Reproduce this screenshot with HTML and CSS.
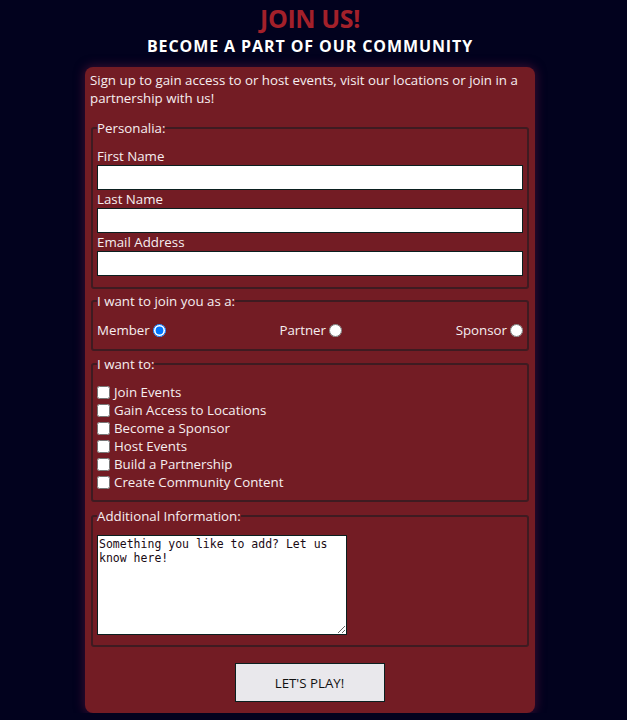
FILE: index.html
```html
<!DOCTYPE html>
<html lang="en">
<head>
<meta charset="utf-8">
<title>Join Us</title>
<link rel="stylesheet" href="styles.css">
</head>
<body>
<div class="page">
  <h1 class="title">JOIN US!</h1>
  <h2 class="subtitle">BECOME A PART OF OUR COMMUNITY</h2>
  <form class="card">
    <p class="intro">Sign up to gain access to or host events, visit our locations or join in a partnership with us!</p>
    <fieldset class="group">
      <legend class="legend">Personalia:</legend>
      <div class="fields">
        <label class="field-label" for="fn">First Name</label>
        <input class="text-input" id="fn" type="text">
        <label class="field-label" for="ln">Last Name</label>
        <input class="text-input" id="ln" type="text">
        <label class="field-label" for="em">Email Address</label>
        <input class="text-input" id="em" type="email">
      </div>
    </fieldset>
    <fieldset class="group">
      <legend class="legend">I want to join you as a:</legend>
      <div class="radios">
        <label class="radio">Member <input type="radio" name="role" checked></label>
        <label class="radio">Partner <input type="radio" name="role"></label>
        <label class="radio">Sponsor <input type="radio" name="role"></label>
      </div>
    </fieldset>
    <fieldset class="group group-wide">
      <legend class="legend">I want to:</legend>
      <div class="checks">
        <label class="check"><input type="checkbox">Join Events</label>
        <label class="check"><input type="checkbox">Gain Access to Locations</label>
        <label class="check"><input type="checkbox">Become a Sponsor</label>
        <label class="check"><input type="checkbox">Host Events</label>
        <label class="check"><input type="checkbox">Build a Partnership</label>
        <label class="check"><input type="checkbox">Create Community Content</label>
      </div>
    </fieldset>
    <fieldset class="group group-last">
      <legend class="legend">Additional Information:</legend>
      <textarea class="notes">Something you like to add? Let us know here!</textarea>
    </fieldset>
    <div class="actions">
      <button class="submit" type="button">LET'S PLAY!</button>
    </div>
  </form>
</div>
</body>
</html>
```
FILE: styles.css
```css
html, body {
  margin: 0;
  padding: 0;
}
body {
  background: #02021e;
  font-family: "Open Sans", "Noto Sans", sans-serif;
  color: #f6eef0;
}
.page {
  width: 620px;
  display: flex;
  flex-direction: column;
  align-items: center;
}
.title {
  margin: 0;
  padding-top: 2px;
  font-size: 25px;
  line-height: 32px;
  font-weight: 700;
  letter-spacing: -0.4px;
  color: #a3202a;
}
.subtitle {
  margin: 0;
  font-size: 16px;
  line-height: 24px;
  font-weight: 700;
  letter-spacing: 0.9px;
  color: #ffffff;
}
.card {
  box-sizing: border-box;
  width: 450px;
  margin-top: 9px;
  padding: 4px 6px 11px 5px;
  background: #731c24;
  border-radius: 8px;
  box-shadow: 0 0 10px 2px rgba(90, 20, 60, 0.55);
}
.intro {
  margin: 0 0 12px;
  font-size: 13.3px;
  line-height: 18px;
}
.group {
  margin: 3px 0 0 1px;
  padding: 0 4px 9px;
  border: 2px solid #3e1b21;
  border-radius: 3px;
  font-size: 13.3px;
  line-height: 18px;
}
.group-wide {
  margin-top: 4px;
}
.group-last {
  margin-top: 5px;
}
.legend {
  padding: 0;
  margin-left: 0;
}
.fields {
  display: flex;
  flex-direction: column;
  padding-top: 10px;
  padding-bottom: 2px;
}
.field-label {
  line-height: 18px;
}
.text-input {
  box-sizing: border-box;
  height: 25px;
  width: 100%;
  margin: 0;
  border: 1px solid #0b1f1f;
  background: #ffffff;
}
.radios {
  display: flex;
  justify-content: space-between;
  padding-top: 11px;
  padding-bottom: 1px;
}
.radio {
  display: flex;
  align-items: center;
}
.radio input {
  margin: 0 0 0 3px;
  width: 13px;
  height: 13px;
}
.checks {
  display: flex;
  flex-direction: column;
  padding-top: 10px;
  padding-bottom: 0;
}
.check {
  display: flex;
  align-items: center;
  height: 18px;
}
.check input {
  margin: 0 4px 0 0;
  width: 13px;
  height: 13px;
}
.notes {
  display: block;
  box-sizing: border-box;
  width: 250px;
  height: 100px;
  margin: 10px 0 1px;
  padding: 1px 1px;
  border: 1px solid #0b1f1f;
  font-family: "DejaVu Sans Mono", monospace;
  font-size: 11.5px;
  line-height: 14px;
  color: #1a0a14;
  background: #ffffff;
  resize: vertical;
}
.actions {
  display: flex;
  justify-content: center;
  padding-top: 16px;
}
.submit {
  width: 150px;
  height: 39px;
  background: #e9e8ec;
  border: 1px solid #0b2020;
  font-family: "Open Sans", sans-serif;
  font-size: 13.3px;
  color: #111111;
}
```
